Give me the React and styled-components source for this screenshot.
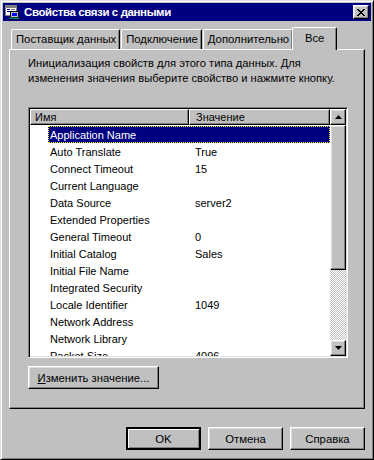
import styled, { createGlobalStyle } from "styled-components";

const GlobalStyle = createGlobalStyle`
  html, body {
    margin: 0;
    padding: 0;
    background: #c0c0c0;
    overflow: hidden;
  }
  body {
    font-family: "Liberation Sans", Arial, sans-serif;
    font-size: 11px;
    color: #000;
  }
`;

const Window = styled.div`
  box-sizing: border-box;
  width: 374px;
  height: 460px;
  padding: 2px;
  background: #c0c0c0;
  border: 1px solid;
  border-color: #dfdfdf #000 #000 #dfdfdf;
  box-shadow: inset 1px 1px #fff, inset -1px -1px #808080;
  display: flex;
  flex-direction: column;
`;

const TitleBar = styled.div`
  height: 18px;
  background: #000080;
  display: flex;
  align-items: center;
  padding: 0 2px 0 1px;
  color: #fff;
`;

const TitleText = styled.span`
  flex: 1;
  margin-left: 4px;
  font-weight: bold;
  font-size: 11.5px;
  letter-spacing: -0.4px;
`;

const Raised = styled.button`
  box-sizing: border-box;
  background: #c0c0c0;
  border: 1px solid;
  border-color: #fff #000 #000 #fff;
  box-shadow: inset -1px -1px #808080, inset 1px 1px #dfdfdf;
  padding: 0;
  margin: 0;
  font: inherit;
  font-weight: normal;
  color: #000;
  display: flex;
  align-items: center;
  justify-content: center;
`;

const CloseButton = styled(Raised)`
  width: 16px;
  height: 14px;
`;

const Body = styled.div`
  flex: 1;
  display: flex;
  flex-direction: column;
  padding: 6px 6px 0 6px;
`;

const TabStrip = styled.div`
  display: flex;
  align-items: flex-end;
  height: 22px;
  padding-left: 2px;
  position: relative;
  z-index: 1;
`;

const Tab = styled.div`
  box-sizing: border-box;
  min-width: ${(p) => (p.$active ? 45 : 41)}px;
  height: ${(p) => (p.$active ? 23 : 20)}px;
  margin: ${(p) => (p.$active ? "0 -2px -1px -2px" : "0 1px 0 0")};
  padding: ${(p) => (p.$active ? "3px 8px 0" : "2px 3px 0 4px")};
  background: #c0c0c0;
  border-top: 1px solid #fff;
  border-left: 1px solid #fff;
  border-right: 1px solid #000;
  border-radius: 2px 2px 0 0;
  box-shadow: inset -1px 0 #808080;
  font-size: 11.3px;
  line-height: 15px;
  text-align: center;
  white-space: nowrap;
  position: relative;
  z-index: ${(p) => (p.$active ? 2 : 0)};
`;

const Panel = styled.div`
  box-sizing: border-box;
  height: 360px;
  border: 1px solid;
  border-color: #fff #000 #000 #fff;
  box-shadow: inset -1px -1px #808080;
  padding: 6px 0 0 18px;
  display: flex;
  flex-direction: column;
  align-items: flex-start;
`;

const Description = styled.p`
  margin: 0;
  font-size: 11.2px;
  line-height: 15px;
  width: 320px;
`;

const ListBox = styled.div`
  box-sizing: border-box;
  margin-top: 21px;
  width: 320px;
  height: 251px;
  border: 1px solid;
  border-color: #808080 #fff #fff #808080;
  box-shadow: inset 1px 1px #000, inset -1px -1px #dfdfdf;
  padding: 1px;
  display: flex;
  background: #fff;
`;

const ListMain = styled.div`
  flex: 1;
  display: flex;
  flex-direction: column;
  overflow: hidden;
`;

const HeaderRow = styled.div`
  display: flex;
  height: 16px;
`;

const HeaderCell = styled.div`
  box-sizing: border-box;
  width: ${(p) => (p.$width ? `${p.$width}px` : "auto")};
  flex: ${(p) => (p.$width ? "none" : 1)};
  height: 16px;
  background: #c0c0c0;
  border: 1px solid;
  border-color: #fff #000 #000 #fff;
  box-shadow: inset -1px -1px #808080;
  padding-left: ${(p) => p.$pad}px;
  line-height: 14px;
`;

const Rows = styled.div`
  flex: 1;
  overflow: hidden;
  padding-top: 1px;
`;

const Row = styled.div`
  height: 17px;
  padding-left: 18px;
  display: flex;
`;

const RowBody = styled.div`
  flex: 1;
  display: flex;
  align-items: center;
  background: ${(p) => (p.$selected ? "#000080" : "transparent")};
  color: ${(p) => (p.$selected ? "#fff" : "#000")};
  outline: ${(p) => (p.$selected ? "1px dotted #ffff00" : "none")};
  outline-offset: -1px;
`;

const NameCell = styled.span`
  width: 144px;
  padding-left: 2px;
  white-space: nowrap;
`;

const ValueCell = styled.span`
  padding-left: 1px;
`;

const ScrollBar = styled.div`
  width: 16px;
  display: flex;
  flex-direction: column;
`;

const ScrollButton = styled(Raised)`
  width: 16px;
  height: 16px;
  flex: none;
`;

const Thumb = styled(Raised)`
  width: 16px;
  height: 145px;
  flex: none;
`;

const Track = styled.div`
  flex: 1;
  background: repeating-conic-gradient(#c0c0c0 0 25%, #fff 0 50%) 0 0 / 2px 2px;
`;

const PushButton = styled(Raised)`
  height: 23px;
  width: ${(p) => p.$width}px;
  font-size: 11.3px;
  ${(p) =>
    p.$default &&
    `
    border-width: 2px;
    border-color: #000;
    box-shadow: inset 1px 1px #fff, inset -1px -1px #808080;
  `}
`;

const EditButton = styled(PushButton)`
  margin-top: 8px;
`;

const Footer = styled.div`
  display: flex;
  justify-content: flex-end;
  gap: 7px;
  margin-top: 18px;
`;

const Underline = styled.span`
  text-decoration: underline;
`;

function WindowIcon() {
  return (
    <svg width="16" height="16" viewBox="0 0 16 16" shapeRendering="crispEdges">
      <rect x="1" y="1" width="11" height="10" fill="#fff" stroke="#808080" />
      <rect x="1.5" y="1.5" width="10" height="2" fill="#808080" />
      <rect x="3" y="5" width="3" height="1" fill="#000080" />
      <rect x="7" y="5" width="4" height="1" fill="#808080" />
      <rect x="3" y="7" width="3" height="1" fill="#000080" />
      <rect x="7" y="7" width="4" height="1" fill="#808080" />
      <rect x="6" y="7" width="8" height="6" fill="#c0c0c0" stroke="#000" />
      <rect x="7.5" y="8.5" width="5" height="3" fill="#0000ff" />
      <rect x="5" y="13" width="10" height="2" fill="#008080" stroke="#000" strokeWidth="0.5" />
    </svg>
  );
}

function CloseGlyph() {
  return (
    <svg width="8" height="7" viewBox="0 0 8 7" shapeRendering="crispEdges">
      <path
        d="M0 0h2v1h1v1h2v-1h1v-1h2v1h-1v1h-1v1h-1v1h1v1h1v1h1v1h-2v-1h-1v-1h-2v1h-1v1h-2v-1h1v-1h1v-1h1v-1h-1v-1h-1v-1h-1z"
        fill="#000"
      />
    </svg>
  );
}

function Arrow({ down }) {
  return (
    <svg width="7" height="4" viewBox="0 0 7 4">
      <polygon points={down ? "0,0 7,0 3.5,4" : "0,4 7,4 3.5,0"} fill="#000" />
    </svg>
  );
}

const properties = [
  ["Application Name", ""],
  ["Auto Translate", "True"],
  ["Connect Timeout", "15"],
  ["Current Language", ""],
  ["Data Source", "server2"],
  ["Extended Properties", ""],
  ["General Timeout", "0"],
  ["Initial Catalog", "Sales"],
  ["Initial File Name", ""],
  ["Integrated Security", ""],
  ["Locale Identifier", "1049"],
  ["Network Address", ""],
  ["Network Library", ""],
  ["Packet Size", "4096"],
  ["Password", ""],
];

const tabs = ["Поставщик данных", "Подключение", "Дополнительно", "Все"];

export default function App() {
  return (
    <>
      <GlobalStyle />
      <Window>
        <TitleBar>
          <WindowIcon />
          <TitleText>Свойства связи с данными</TitleText>
          <CloseButton>
            <CloseGlyph />
          </CloseButton>
        </TitleBar>
        <Body>
          <TabStrip>
            {tabs.map((t, i) => (
              <Tab key={t} $active={i === 3}>
                {t}
              </Tab>
            ))}
          </TabStrip>
          <Panel>
            <Description>
              Инициализация свойств для этого типа данных. Для изменения
              значения выберите свойство и нажмите кнопку.
            </Description>
            <ListBox>
              <ListMain>
                <HeaderRow>
                  <HeaderCell $width={159} $pad={4}>
                    Имя
                  </HeaderCell>
                  <HeaderCell $pad={6}>Значение</HeaderCell>
                </HeaderRow>
                <Rows>
                  {properties.map(([name, value], i) => (
                    <Row key={name}>
                      <RowBody $selected={i === 0}>
                        <NameCell>{name}</NameCell>
                        <ValueCell>{value}</ValueCell>
                      </RowBody>
                    </Row>
                  ))}
                </Rows>
              </ListMain>
              <ScrollBar>
                <ScrollButton>
                  <Arrow />
                </ScrollButton>
                <Thumb />
                <Track />
                <ScrollButton>
                  <Arrow down />
                </ScrollButton>
              </ScrollBar>
            </ListBox>
            <EditButton $width={131}>
              <span>
                <Underline>И</Underline>зменить значение...
              </span>
            </EditButton>
          </Panel>
          <Footer>
            <PushButton $width={75} $default>
              OK
            </PushButton>
            <PushButton $width={75}>Отмена</PushButton>
            <PushButton $width={75}>Справка</PushButton>
          </Footer>
        </Body>
      </Window>
    </>
  );
}
